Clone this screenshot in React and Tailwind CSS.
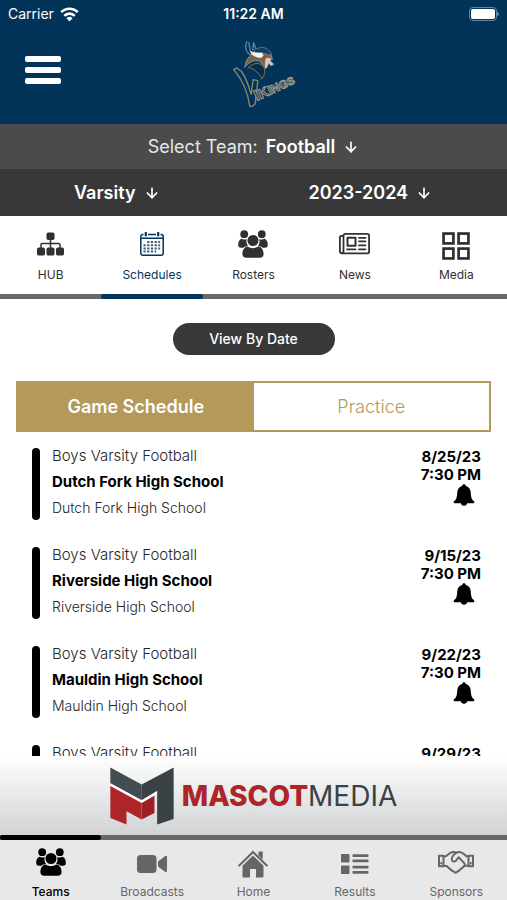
import { ArrowDown } from "lucide-react";

const games = [
    { team: "Boys Varsity Football", opponent: "Dutch Fork High School", place: "Dutch Fork High School", date: "8/25/23", time: "7:30 PM" },
    { team: "Boys Varsity Football", opponent: "Riverside High School", place: "Riverside High School", date: "9/15/23", time: "7:30 PM" },
    { team: "Boys Varsity Football", opponent: "Mauldin High School", place: "Mauldin High School", date: "9/22/23", time: "7:30 PM" },
    { team: "Boys Varsity Football", opponent: "Hillcrest High School", place: "Hillcrest High School", date: "9/29/23", time: "7:30 PM" },
];

const WifiIcon = ({ className }) => (
    <svg viewBox="0 0 19 15" className={className} fill="none" stroke="currentColor" strokeWidth="2.6" aria-hidden="true">
        <path d="M1.2 5.2a11.6 11.6 0 0 1 16.6 0" />
        <path d="M4.3 8.8a7.3 7.3 0 0 1 10.4 0" />
        <path d="M9.5 14.5l-3-3.2a4.3 4.3 0 0 1 6 0z" fill="currentColor" stroke="none" />
    </svg>
);

const SitemapIcon = ({ className }) => (
    <svg viewBox="0 0 27 24" className={className} fill="currentColor" aria-hidden="true">
        <rect x="9.5" y="0.5" width="8" height="7.5" rx="1.8" />
        <rect x="0" y="15.5" width="8" height="8" rx="1.8" />
        <rect x="9.5" y="15.5" width="8" height="8" rx="1.8" />
        <rect x="19" y="15.5" width="8" height="8" rx="1.8" />
        <path d="M13.5 7v9M4 16v-3.2c0-.8.4-1.2 1.2-1.2h16.600c.8 0 1.2.4 1.2 1.2V16" fill="none" stroke="currentColor" strokeWidth="1.5" />
    </svg>
);

const GroupIcon = ({ className }) => (
    <svg viewBox="0 0 30 28" className={className} fill="currentColor" aria-hidden="true">
        <circle cx="6.2" cy="4.2" r="3.9" />
        <circle cx="23.8" cy="4.2" r="3.9" />
        <path d="M3.4 8.8c1.6 1 4 1 5.4.2-.8 2.6-.2 5 1.2 7-2 .2-3.4.6-4.6 1.7H3c-1.8 0-2.8-1-2.8-2.7 0-2.6.8-5.2 3.2-6.2z" />
        <path d="M26.6 8.8c-1.6 1-4 1-5.4.2.8 2.6.2 5-1.2 7 2 .2 3.4.6 4.6 1.7H27c1.8 0 2.8-1 2.8-2.7 0-2.6-.8-5.2-3.2-6.2z" />
        <circle cx="15" cy="10.5" r="5.5" />
        <path d="M9.8 16.4c3 2.3 7.4 2.3 10.4 0 3.8.4 5.4 4 5.4 7.600 0 2.4-1.4 3.7-3.8 3.7H8.2c-2.4 0-3.8-1.3-3.8-3.7 0-3.600 1.6-7.2 5.4-7.600z" />
    </svg>
);

const CalendarIcon = ({ className }) => (
    <svg viewBox="0 0 24 24" className={className} fill="none" stroke="currentColor" aria-hidden="true">
        <path d="M3.5 2.5H2.8A2 2 0 0 0 .8 4.5v16.7a2 2 0 0 0 2 2h18.4a2 2 0 0 0 2-2V4.5a2 2 0 0 0-2-2h-.7M8 2.5h8M.8 6.2h22.4" strokeWidth="1.5" />
        <path d="M5.800.8v2.600M18.2.8v2.600" strokeWidth="2.2" strokeLinecap="round" />
        <path d="M7.2 10h12.900M3.500 13.200h16.600M3.500 16.400h16.600M3.500 19.600h12.600" strokeWidth="2" strokeDasharray="2.2 1.5" opacity=".8" />
    </svg>
);

const NewsIcon = ({ className }) => (
    <svg viewBox="0 0 31 23" className={className} fill="none" stroke="currentColor" strokeWidth="1.8" strokeLinecap="round" strokeLinejoin="round" aria-hidden="true">
        <path d="M4.500 2.800V18c0 3-3.600 3-3.600 0V4.300c0-1 .5-1.500 1.500-1.500h2.100c0-1.300.6-1.900 1.800-1.900h22c1.200 0 1.800.6 1.800 1.900v15.600c0 1.200-.6 1.900-1.800 1.900H2.800" />
        <rect x="8.5" y="4.8" width="8" height="8" strokeWidth="2" />
        <path d="M20 4.800h6.500M20 8.300h6.500M20 12.300h6.500M20 16.300h6.500M8 16.300h8.500" />
    </svg>
);

const GridIcon = ({ className }) => (
    <svg viewBox="0 0 27 27" className={className} fill="none" stroke="currentColor" strokeWidth="2.6" aria-hidden="true">
        <rect x="1.5" y="1.5" width="9.5" height="9.5" />
        <rect x="16" y="1.5" width="9.5" height="9.5" />
        <rect x="1.5" y="16" width="9.5" height="9.5" />
        <rect x="16" y="16" width="9.5" height="9.5" />
    </svg>
);

const BellIcon = ({ className }) => (
    <svg viewBox="0 0 22 22" className={className} fill="currentColor" aria-hidden="true">
        <path d="M11 .3c1 0 1.700.6 1.800 1.600 2.900.8 4.700 3 4.900 6.200.2 4 .6 6.300 1.700 7.600.7.900 2 1.400 2 2.600 0 .6-.4.900-1 .9H1.600c-.6 0-1-.3-1-.9 0-1.200 1.300-1.700 2-2.600 1.100-1.300 1.500-3.600 1.700-7.600.2-3.200 2-5.400 4.900-6.200C9.300.9 10 .3 11 .3z" />
        <path d="M8 19h6c0 1.700-1.200 2.800-3 2.800S8 20.700 8 19z" />
    </svg>
);

const VideoIcon = ({ className }) => (
    <svg viewBox="0 0 30 20" className={className} fill="currentColor" aria-hidden="true">
        <rect x="0" y="1" width="19.5" height="18" rx="3.5" />
        <path d="M21 7.500l7-5.300c1-.7 2-.3 2 1v13.600c0 1.300-1 1.700-2 1l-7-5.300z" />
    </svg>
);

const HomeIcon = ({ className }) => (
    <svg viewBox="0 0 30 28" className={className} aria-hidden="true">
        <path d="M20.500 1.500h4.200v8l-4.200-4z" fill="currentColor" />
        <path d="M1.200 15.500L15 2l13.800 13.500" fill="none" stroke="currentColor" strokeWidth="2" strokeLinecap="round" />
        <path d="M15 5.500l10.500 10.300V26c0 1-.6 1.500-1.500 1.500h-6V19h-6v8.500H6c-.9 0-1.500-.5-1.500-1.500V15.800z" fill="currentColor" />
    </svg>
);

const ResultsIcon = ({ className }) => (
    <svg viewBox="0 0 28 20" className={className} fill="currentColor" aria-hidden="true">
        <rect x="0" y="0" width="8.5" height="8.5" rx=".8" />
        <rect x="0" y="11.5" width="8.5" height="8.5" rx=".8" />
        <rect x="11.5" y="0.3" width="16" height="2.7" rx=".8" />
        <rect x="11.5" y="5.5" width="16" height="2.7" rx=".8" />
        <rect x="11.5" y="11.8" width="16" height="2.7" rx=".8" />
        <rect x="11.5" y="17" width="16" height="2.7" rx=".8" />
    </svg>
);

const HandshakeIcon = ({ className }) => (
    <svg viewBox="0 0 36 23" className={className} fill="none" stroke="currentColor" strokeWidth="2" strokeLinecap="round" strokeLinejoin="round" aria-hidden="true">
        <path d="M1 4.700h4.500v10.600H1zM35 4.700h-4.500v10.600H35z" />
        <path d="M5.500 5.300h2.300C10.500 3 12.800 1 15.300 1c1.200 0 2 .3 2.900.9C19.300 1.200 20.300 1 21.500 1c2.800 0 4.700 2.500 6.900 4.200h2.100" />
        <path d="M18.200 1.900c-2.400 1.300-4.400 4.500-4.500 6.500 0 2 2.600 2.900 4.300 1.300l2.600-3.400 5.400 5.600c1.200 1.300 1 2.600-.1 3.500-2.600 2.300-5 4.700-8.300 6.400-3.200-1.600-6.300-4.100-9-6.800H5.500" />
        <path d="M26.200 14.800h4.300" />
        <path d="M3.200 12v.6M32.800 12v.6" />
    </svg>
);

const VikingsLogo = () => (
    <svg viewBox="38 30 200 204" className="h-[68px] w-[67px]" role="img" aria-label="Vikings">
        <g strokeLinejoin="round" strokeLinecap="round">
            <path d="M82 35c-6 14-4 30 8 38 10 6 24 8 36 6M92 58l-4-20M100 60l2-22 8 20" fill="none" stroke="#5f87a6" strokeWidth="4" />
            <path d="M104 66c12-14 44-14 50 6l5 16-12-4-8 10-6 16-12-16c-18-6-32 2-45 18 3-24 12-34 28-44z" fill="#7e633b" stroke="#6d91ab" strokeWidth="3" />
            <path d="M106 60c16-14 42-9 49 12l-4 4c-14-8-30-8-45-8z" fill="#123d60" stroke="#6d91ab" strokeWidth="2" />
            <path d="M90 60c8 8 24 8 38 8l4 9-8 7c-14 0-30-8-34-24z" fill="#eef3f7" />
            <path d="M137 86c7-6 14-4 20 2l-4 5 11 10-9 5-7-7-5 12-8 5z" fill="#d1cac5" stroke="#8b5a45" strokeWidth="2" />
            <path d="M88 112c16-16 34-16 46 1 4 13 0 25-7 34-7-19-22-28-39-35z" fill="#082d4c" stroke="#84714f" strokeWidth="3" />
            <path d="M43 119l8-5 14 9c12 16 22 42 30 70l6-44 14 3-8 70-9 7h-7c-6-42-20-77-48-110z" fill="#02345a" stroke="#8f886f" strokeWidth="4" />
        </g>
        <g transform="translate(112 213) rotate(-25)" fill="#02345a" stroke="#a19a83" strokeWidth="3">
            <text x="0" y="0" className="font-['Liberation_Sans',sans-serif] font-bold">
                <tspan fontSize="46">I</tspan>
                <tspan fontSize="42">K</tspan>
                <tspan fontSize="38">I</tspan>
                <tspan fontSize="36">N</tspan>
                <tspan fontSize="34">G</tspan>
                <tspan fontSize="32">S</tspan>
            </text>
        </g>
    </svg>
);

const MascotLogo = () => (
    <svg viewBox="61 84 190 171" className="h-[58px] w-16" aria-hidden="true">
        <path d="M62 85l93 50v47l-93-50z" fill="#434b53" />
        <path d="M250 85l-95 50v47l46-27v99l49-16z" fill="#3a4245" />
        <path d="M62 132l93 50 46-27v8l-46 27-93-50z" fill="#fff" />
        <path d="M62 140l93 50v49l-45-24v39l-48-19z" fill="#ad2529" />
        <path d="M155 190l38-21v51l-38 19z" fill="#9f2024" />
    </svg>
);

const teamTabs = [
    { name: "HUB", icon: <SitemapIcon className="h-6 w-[27px]" /> },
    { name: "Schedules", icon: <CalendarIcon className="size-6" />, active: true },
    { name: "Rosters", icon: <GroupIcon className="h-7 w-[30px]" /> },
    { name: "News", icon: <NewsIcon className="h-[23px] w-[31px]" /> },
    { name: "Media", icon: <GridIcon className="mt-1 size-7" /> },
];

const bottomTabs = [
    { name: "Teams", icon: <GroupIcon className="h-7 w-[30px]" />, active: true },
    { name: "Broadcasts", icon: <VideoIcon className="mt-1 h-5 w-[30px]" /> },
    { name: "Home", icon: <HomeIcon className="mt-1 h-7 w-[30px]" /> },
    { name: "Results", icon: <ResultsIcon className="mt-1 h-5 w-7" /> },
    { name: "Sponsors", icon: <HandshakeIcon className="h-[23px] w-9" /> },
];

const PickerField = ({ id, label, value, showLabel }) => (
    <div className="flex items-center justify-center text-lg text-white">
        {showLabel && (
            <label htmlFor={id} className="mr-2 text-gray-200">
                {label}
            </label>
        )}
        <select
            id={id}
            aria-label={showLabel ? undefined : label}
            defaultValue={value}
            className="h-9 appearance-none field-sizing-content bg-transparent font-semibold"
        >
            <option>{value}</option>
        </select>
        <ArrowDown className="ml-2 size-4" strokeWidth={2.5} aria-hidden="true" />
    </div>
);

const GameRow = ({ game }) => (
    <li className="flex h-[72px] shrink-0">
        <div className="w-2 rounded-full bg-black" />
        <div className="ml-3 flex flex-1 flex-col gap-2.5">
            <p className="text-[15px] leading-4 font-light text-neutral-800">{game.team}</p>
            <p className="text-[15px] leading-4 font-bold text-black">{game.opponent}</p>
            <p className="text-sm leading-4 font-light text-neutral-800">{game.place}</p>
        </div>
        <div className="flex flex-col items-end text-[15px] leading-[18px] font-bold text-black">
            <span>{game.date}</span>
            <span>{game.time}</span>
            <button type="button" aria-label="Notify me" className="mr-1.5">
                <BellIcon className="size-[22px]" />
            </button>
        </div>
    </li>
);

const App = () => {
    return (
        <div className="flex h-screen flex-col overflow-hidden bg-white font-['Inter',sans-serif]">
            <header className="h-[124px] shrink-0 bg-[#02345a] text-white">
                <div className="grid h-7 grid-cols-3 items-center px-2 text-sm">
                    <div className="flex items-center gap-1.5">
                        <span>Carrier</span>
                        <WifiIcon className="h-[15px] w-[19px]" />
                    </div>
                    <span className="text-center font-semibold">11:22 AM</span>
                    <div className="flex items-center justify-end">
                        <div className="h-3.5 w-7 rounded-sm border border-[#6686a0] p-px">
                            <div className="h-full rounded-xs bg-white" />
                        </div>
                        <div className="h-1 w-0.5 rounded-r-full bg-[#6686a0]" />
                    </div>
                </div>
                <div className="grid grid-cols-3 items-start pt-3">
                    <button type="button" aria-label="Menu" className="mt-4 ml-[25px] flex w-9 flex-col gap-[5px]">
                        <span className="h-1.5 rounded-xs bg-white" />
                        <span className="h-1.5 rounded-xs bg-white" />
                        <span className="h-1.5 rounded-xs bg-white" />
                    </button>
                    <div className="ml-6 flex justify-center">
                        <VikingsLogo />
                    </div>
                </div>
            </header>

            <div className="flex h-[45px] shrink-0 items-center justify-center bg-[#4b4b4b]">
                <PickerField id="team" label="Select Team:" value="Football" showLabel />
            </div>
            <div className="grid h-[47px] shrink-0 grid-cols-[117fr_137fr] items-center bg-[#383838]">
                <PickerField id="level" label="Level" value="Varsity" />
                <PickerField id="season" label="Season" value="2023-2024" />
            </div>

            <nav className="grid h-[83px] shrink-0 grid-cols-5 bg-linear-to-t from-[#686868] from-[5px] to-white to-[5px]">
                {teamTabs.map((tab) => (
                    <a
                        key={tab.name}
                        href="#"
                        className={`flex flex-col items-center text-xs ${tab.active ? "text-[#02345a]" : "text-[#303030]"}`}
                    >
                        <span className="mt-3 flex h-8 items-center">{tab.icon}</span>
                        <span className="mt-[7px]">{tab.name}</span>
                        {tab.active && <span className="mt-auto h-[5px] w-full rounded-full bg-[#02345a]" />}
                    </a>
                ))}
            </nav>

            <main className="flex min-h-0 flex-1 flex-col overflow-hidden">
                <button type="button" className="mt-6 h-8 w-[162px] shrink-0 self-center rounded-full bg-[#383838] text-sm font-medium text-white">
                    View By Date
                </button>
                <div className="mx-4 mt-[26px] grid h-[51px] shrink-0 grid-cols-2 border-2 border-[#b4995a] text-lg">
                    <button type="button" className="bg-[#b4995a] font-semibold text-white">Game Schedule</button>
                    <button type="button" className="font-light text-[#b4995a]">Practice</button>
                </div>
                <ul className="mt-4 flex flex-col gap-[27px] pr-[26px] pl-8">
                    {games.map((game) => (
                        <GameRow key={game.date} game={game} />
                    ))}
                </ul>
            </main>

            <footer className="shrink-0">
                <a href="#" className="flex h-[79px] items-center justify-center gap-2 bg-linear-to-b from-white to-[#d1d3d4]">
                    <MascotLogo />
                    <span className="text-[28px] text-[#3a4245]">
                        <b className="font-extrabold text-[#ad2529]">MASCOT</b>MEDIA
                    </span>
                </a>
                <nav className="grid h-[65px] grid-cols-5 bg-linear-to-b from-[#686868] from-[5px] to-[#e8e8e8] to-[5px]">
                    {bottomTabs.map((tab) => (
                        <a
                            key={tab.name}
                            href="#"
                            className={`flex flex-col items-center text-xs ${tab.active ? "font-medium text-black" : "text-[#666]"}`}
                        >
                            <span className={`h-[5px] w-full rounded-full ${tab.active ? "bg-black" : ""}`} />
                            <span className="mt-1.5 flex h-8 items-center">{tab.icon}</span>
                            <span className="mt-1.5">{tab.name}</span>
                        </a>
                    ))}
                </nav>
            </footer>
        </div>
    );
};

export default App;
